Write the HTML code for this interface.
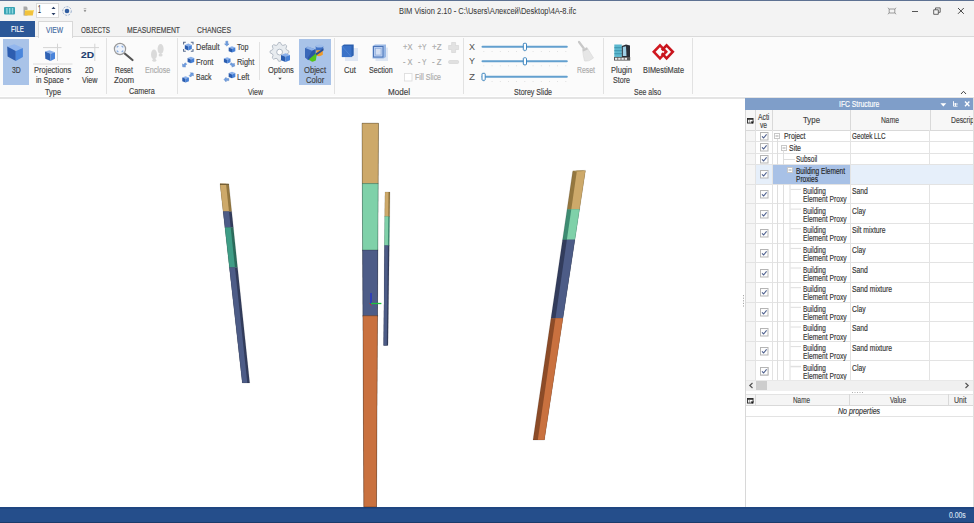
<!DOCTYPE html><html><head><meta charset="utf-8"><style>
*{margin:0;padding:0}
html,body{width:974px;height:523px;overflow:hidden;background:#fff}
body{position:relative;font-family:"Liberation Sans",sans-serif}
.t{position:absolute;white-space:nowrap;line-height:1;transform-origin:0 50%;-webkit-text-stroke:0.15px currentColor}
.r{position:absolute}
svg{position:absolute;overflow:visible}
</style></head><body>
<div class="r" style="left:0px;top:0px;width:974px;height:1px;background:#5d7192;"></div>
<div class="r" style="left:0px;top:1px;width:974px;height:36px;background:#f3f3f3;"></div>
<div class="r" style="left:0px;top:37px;width:974px;height:60px;background:#fbfbfb;"></div>
<div class="r" style="left:0px;top:36px;width:974px;height:1px;background:#dadada;"></div>
<div class="r" style="left:0px;top:96px;width:974px;height:1px;background:#ffffff;"></div>
<div class="r" style="left:0px;top:97px;width:974px;height:2px;background:#e4e4e4;"></div>
<div class="r" style="left:0px;top:99px;width:744px;height:408px;background:#ffffff;"></div>
<div class="r" style="left:0px;top:507px;width:974px;height:16px;background:#254e8b;"></div>
<div class="r" style="left:0px;top:507px;width:974px;height:1.5px;background:#1f4681;"></div>
<div class="r" style="left:0px;top:521.5px;width:974px;height:1.5px;background:#1c3b6a;"></div>
<div class="r" style="left:0px;top:21px;width:35px;height:16px;background:#2b5797;"></div>
<div class="t" style="left:10.80px;top:24.73px;font-size:8.5px;color:#ffffff;transform:scaleX(0.719);">FILE</div>
<div class="r" style="left:38px;top:21px;width:34.5px;height:17px;background:#fcfcfc;border:1px solid #d8d8d8;border-bottom:none;box-sizing:border-box;"></div>
<div class="t" style="left:46.00px;top:25.53px;font-size:8.5px;color:#4369a2;transform:scaleX(0.783);">VIEW</div>
<div class="t" style="left:81.00px;top:25.53px;font-size:8.5px;color:#444;transform:scaleX(0.740);">OBJECTS</div>
<div class="t" style="left:127.00px;top:25.53px;font-size:8.5px;color:#444;transform:scaleX(0.802);">MEASUREMENT</div>
<div class="t" style="left:197.00px;top:25.53px;font-size:8.5px;color:#444;transform:scaleX(0.809);">CHANGES</div>
<div class="t" style="left:398.60px;top:6.93px;font-size:8.5px;color:#3a3a3a;transform:scaleX(0.886);-webkit-text-stroke:0.05px #3a3a3a;">BIM Vision 2.10 - C:\Users\Алексей\Desktop\4A-8.ifc</div>
<div class="r" style="left:106px;top:38px;width:1px;height:56px;background:#e2e2e2;"></div>
<div class="r" style="left:177px;top:38px;width:1px;height:56px;background:#e2e2e2;"></div>
<div class="r" style="left:333.5px;top:38px;width:1.0px;height:56px;background:#e2e2e2;"></div>
<div class="r" style="left:463px;top:38px;width:1px;height:56px;background:#e2e2e2;"></div>
<div class="r" style="left:602.5px;top:38px;width:1.0px;height:56px;background:#e2e2e2;"></div>
<div class="r" style="left:692px;top:38px;width:1px;height:56px;background:#e2e2e2;"></div>
<div class="r" style="left:259px;top:42px;width:1px;height:38px;background:#e2e2e2;"></div>
<div class="r" style="left:3px;top:39px;width:26px;height:46px;background:#a9c3e8;"></div>
<div class="r" style="left:299px;top:39px;width:32px;height:46px;background:#a9c3e8;"></div>
<div class="t" style="left:11.50px;top:65.73px;font-size:8.5px;color:#3f3f3f;transform:scaleX(0.810);">3D</div>
<div class="t" style="left:34.30px;top:66.23px;font-size:8.5px;color:#3f3f3f;transform:scaleX(0.887);">Projections</div>
<div class="t" style="left:36.20px;top:75.73px;font-size:8.5px;color:#3f3f3f;transform:scaleX(0.840);">in Space</div>
<div class="t" style="left:85.00px;top:66.23px;font-size:8.5px;color:#3f3f3f;transform:scaleX(0.791);">2D</div>
<div class="t" style="left:82.00px;top:75.73px;font-size:8.5px;color:#3f3f3f;transform:scaleX(0.843);">View</div>
<div class="t" style="left:45.00px;top:87.73px;font-size:8.5px;color:#3f3f3f;transform:scaleX(0.868);">Type</div>
<div class="t" style="left:115.30px;top:65.83px;font-size:8.5px;color:#3f3f3f;transform:scaleX(0.802);">Reset</div>
<div class="t" style="left:114.20px;top:75.63px;font-size:8.5px;color:#3f3f3f;transform:scaleX(0.925);">Zoom</div>
<div class="t" style="left:144.60px;top:65.73px;font-size:8.5px;color:#aaaaaa;transform:scaleX(0.837);">Enclose</div>
<div class="t" style="left:129.10px;top:87.33px;font-size:8.5px;color:#3f3f3f;transform:scaleX(0.853);">Camera</div>
<div class="t" style="left:195.70px;top:42.83px;font-size:8.5px;color:#3f3f3f;transform:scaleX(0.876);">Default</div>
<div class="t" style="left:195.50px;top:57.73px;font-size:8.5px;color:#3f3f3f;transform:scaleX(0.877);">Front</div>
<div class="t" style="left:195.50px;top:72.93px;font-size:8.5px;color:#3f3f3f;transform:scaleX(0.820);">Back</div>
<div class="t" style="left:236.80px;top:42.83px;font-size:8.5px;color:#3f3f3f;transform:scaleX(0.839);">Top</div>
<div class="t" style="left:236.80px;top:57.73px;font-size:8.5px;color:#3f3f3f;transform:scaleX(0.867);">Right</div>
<div class="t" style="left:236.80px;top:72.93px;font-size:8.5px;color:#3f3f3f;transform:scaleX(0.875);">Left</div>
<div class="t" style="left:267.60px;top:66.23px;font-size:8.5px;color:#3f3f3f;transform:scaleX(0.881);">Options</div>
<div class="t" style="left:303.90px;top:66.23px;font-size:8.5px;color:#3f3f3f;transform:scaleX(0.896);">Object</div>
<div class="t" style="left:305.80px;top:75.53px;font-size:8.5px;color:#3f3f3f;transform:scaleX(0.896);">Color</div>
<div class="t" style="left:248.00px;top:87.73px;font-size:8.5px;color:#3f3f3f;transform:scaleX(0.821);">View</div>
<div class="t" style="left:343.80px;top:65.83px;font-size:8.5px;color:#3f3f3f;transform:scaleX(0.892);">Cut</div>
<div class="t" style="left:369.00px;top:65.83px;font-size:8.5px;color:#3f3f3f;transform:scaleX(0.836);">Section</div>
<div class="t" style="left:403.00px;top:42.73px;font-size:8.5px;color:#aaaaaa;transform:scaleX(0.884);">+X</div>
<div class="t" style="left:417.50px;top:42.73px;font-size:8.5px;color:#aaaaaa;transform:scaleX(0.799);">+Y</div>
<div class="t" style="left:432.00px;top:42.73px;font-size:8.5px;color:#aaaaaa;transform:scaleX(0.935);">+Z</div>
<div class="t" style="left:403.00px;top:58.13px;font-size:8.5px;color:#aaaaaa;transform:scaleX(0.865);">- X</div>
<div class="t" style="left:417.50px;top:58.13px;font-size:8.5px;color:#aaaaaa;transform:scaleX(0.794);">- Y</div>
<div class="t" style="left:432.00px;top:58.13px;font-size:8.5px;color:#aaaaaa;transform:scaleX(0.915);">- Z</div>
<div class="t" style="left:415.00px;top:72.73px;font-size:8.5px;color:#aaaaaa;transform:scaleX(0.822);">Fill Slice</div>
<div class="t" style="left:388.00px;top:87.73px;font-size:8.5px;color:#3f3f3f;transform:scaleX(0.950);">Model</div>
<div class="t" style="left:469.00px;top:42.73px;font-size:8.5px;color:#505050;transform:scaleX(1.058);-webkit-text-stroke:0;">X</div>
<div class="t" style="left:469.00px;top:57.03px;font-size:8.5px;color:#505050;transform:scaleX(1.058);-webkit-text-stroke:0;">Y</div>
<div class="t" style="left:469.00px;top:72.73px;font-size:8.5px;color:#505050;transform:scaleX(1.156);-webkit-text-stroke:0;">Z</div>
<div class="t" style="left:577.00px;top:66.03px;font-size:8.5px;color:#aaaaaa;transform:scaleX(0.811);">Reset</div>
<div class="t" style="left:514.00px;top:87.73px;font-size:8.5px;color:#3f3f3f;transform:scaleX(0.829);">Storey Slide</div>
<div class="t" style="left:611.00px;top:66.13px;font-size:8.5px;color:#3f3f3f;transform:scaleX(0.889);">Plugin</div>
<div class="t" style="left:613.00px;top:75.73px;font-size:8.5px;color:#3f3f3f;transform:scaleX(0.837);">Store</div>
<div class="t" style="left:643.00px;top:66.13px;font-size:8.5px;color:#3f3f3f;transform:scaleX(0.868);">BIMestiMate</div>
<div class="t" style="left:634.00px;top:87.73px;font-size:8.5px;color:#3f3f3f;transform:scaleX(0.816);">See also</div>
<svg style="left:0;top:0" width="974" height="523"><polygon points="220.00,183.70 228.77,183.70 231.72,211.80 223.14,211.80" fill="#94773f"/><polygon points="220.00,183.70 226.00,183.70 229.00,211.80 223.14,211.80" fill="#cda96a"/><polygon points="223.10,211.40 231.68,211.40 233.40,227.80 224.93,227.80" fill="#323c5c"/><polygon points="223.10,211.40 228.96,211.40 230.71,227.80 224.93,227.80" fill="#4d5c87"/><polygon points="224.89,227.40 233.36,227.40 237.60,267.80 229.41,267.80" fill="#2b6b5b"/><polygon points="224.89,227.40 230.67,227.40 234.99,267.80 229.41,267.80" fill="#3f9d86"/><polygon points="229.37,267.40 237.56,267.40 249.70,383.00 242.30,383.00" fill="#323c5c"/><polygon points="229.37,267.40 234.95,267.40 247.30,383.00 242.30,383.00" fill="#4d5c87"/><polygon points="220,183.7 228.8,184 228.8,185 220,185" fill="#7a6438"/><polygon points="362.00,123.20 378.50,123.20 378.18,184.00 362.29,184.00" fill="#94773f"/><polygon points="362.00,123.20 378.50,123.20 378.18,184.00 362.29,184.00" fill="#cda96a"/><polygon points="362.28,183.60 378.19,183.60 377.84,250.40 362.60,250.40" fill="#3e8c72"/><polygon points="362.28,183.60 378.19,183.60 377.84,250.40 362.60,250.40" fill="#7fd1a9"/><polygon points="362.59,250.00 377.84,250.00 377.49,316.20 362.91,316.20" fill="#323c5c"/><polygon points="362.59,250.00 377.84,250.00 377.49,316.20 362.91,316.20" fill="#4d5c87"/><polygon points="362.90,315.80 377.50,315.80 376.50,507.00 363.80,507.00" fill="#8c4b27"/><polygon points="362.90,315.80 377.50,315.80 376.50,507.00 363.80,507.00" fill="#c9713f"/><path d="M362.3 183.6 H378.2" stroke="#00000045" stroke-width="0.8"/><path d="M362.3 250 H378.2" stroke="#00000045" stroke-width="0.8"/><path d="M362.3 315.8 H378.2" stroke="#00000045" stroke-width="0.8"/><polygon points="362,123.2 378.5,123.2 376.5,507 363.8,507" fill="none" stroke="#00000055" stroke-width="0.8"/><polygon points="385.00,192.00 390.00,192.00 389.68,216.90 384.77,216.90" fill="#94773f"/><polygon points="385.00,192.00 388.50,192.00 388.22,216.90 384.77,216.90" fill="#cda96a"/><polygon points="384.78,216.50 389.68,216.50 389.30,245.90 384.51,245.90" fill="#3e8c72"/><polygon points="384.78,216.50 388.23,216.50 387.90,245.90 384.51,245.90" fill="#7fd1a9"/><polygon points="384.51,245.50 389.30,245.50 388.00,345.50 383.60,345.50" fill="#323c5c"/><polygon points="384.51,245.50 387.91,245.50 386.80,345.50 383.60,345.50" fill="#4d5c87"/><polygon points="572.76,170.80 585.42,170.80 579.50,209.70 567.02,209.70" fill="#94773f"/><polygon points="576.90,170.80 585.42,170.80 579.50,209.70 571.25,209.70" fill="#cda96a"/><polygon points="567.08,209.30 579.56,209.30 574.85,240.20 562.51,240.20" fill="#3e8c72"/><polygon points="571.31,209.30 579.56,209.30 574.85,240.20 566.82,240.20" fill="#7fd1a9"/><polygon points="562.57,239.80 574.91,239.80 562.89,318.70 550.92,318.70" fill="#323c5c"/><polygon points="566.88,239.80 574.91,239.80 562.89,318.70 555.42,318.70" fill="#4d5c87"/><polygon points="550.98,318.30 562.95,318.30 544.40,440.00 533.00,440.00" fill="#8c4b27"/><polygon points="555.48,318.30 562.95,318.30 544.40,440.00 537.80,440.00" fill="#c9713f"/><polygon points="572.6,171.9 576.4,170.8 585.5,170.3 581.5,171.5" fill="#b89a5a"/><polygon points="220,183.7 228.8,184 249.7,383 242.3,383" fill="none" stroke="#00000030" stroke-width="0.6"/><polygon points="385,192 390,192 388,345.5 383.6,345.5" fill="none" stroke="#00000030" stroke-width="0.5"/><polygon points="572.6,171.9 576.4,170.8 585.5,170.3 544.4,440 533,440" fill="none" stroke="#00000030" stroke-width="0.6"/><path d="M371 293 V303.5" stroke="#2030d0" stroke-width="1.3"/><path d="M371 303.5 H381.4" stroke="#20c040" stroke-width="1.3"/><path d="M369.5 303.5 L371.5 305.5" stroke="#c03030" stroke-width="1"/></svg>
<svg style="left:4px;top:6.8px" width="11" height="8" viewBox="0 0 11 8"><rect x="0" y="0" width="11" height="7.5" rx="1" fill="#3aa4b4"/><rect x="2.2" y="1" width="1.4" height="5.5" fill="#8fd8e0"/><rect x="5" y="1" width="1.4" height="5.5" fill="#8fd8e0"/><rect x="7.8" y="1" width="1.4" height="5.5" fill="#8fd8e0"/></svg>
<svg style="left:22.5px;top:6px" width="11" height="10" viewBox="0 0 11 10"><path d="M0.5 0.5 H3.5 L4.5 1.8 V9.5 H0.5Z" fill="#a8a8a8"/><path d="M2 4 H10.8 L9.8 9.6 H1.5Z" fill="#f2c23a"/><path d="M2 4 H10.8 L10.6 5 H1.9Z" fill="#f8dc70"/></svg>
<div class="r" style="left:35.6px;top:3.2px;width:23.5px;height:14.8px;background:#ffffff;border:1px solid #dadada;box-sizing:border-box;"></div>
<div class="t" style="left:38.20px;top:5.28px;font-size:10px;color:#333;transform:scaleX(0.539);-webkit-text-stroke:0.1px #333;">1</div>
<svg style="left:50.5px;top:5.5px" width="5" height="10" viewBox="0 0 5 10"><path d="M0.5 3 L2.5 0.8 L4.5 3Z" fill="#2b3f66"/><path d="M0.5 7 L2.5 9.2 L4.5 7Z" fill="#2b3f66"/></svg>
<svg style="left:62.3px;top:5.5px" width="10" height="10" viewBox="0 0 10 10"><circle cx="5" cy="5" r="4.3" fill="none" stroke="#8ea6c8" stroke-width="0.9" stroke-dasharray="2 1.2"/><circle cx="5" cy="5" r="2.3" fill="#2f5ca0"/></svg>
<svg style="left:82.5px;top:8px" width="4" height="5" viewBox="0 0 4 5"><path d="M0.7 0.7 H3.3" stroke="#999" stroke-width="0.7"/><path d="M0.6 2.2 H3.4 L2 4Z" fill="#777"/></svg>
<svg style="left:886.5px;top:6.5px" width="10" height="8" viewBox="0 0 10 8" fill="none" stroke="#777" stroke-width="0.7"><path d="M2.2 2 H7.8 V6 H2.2Z"/><path d="M0.8 0.8 L2.2 2 M9.2 0.8 L7.8 2 M0.8 7.2 L2.2 6 M9.2 7.2 L7.8 6"/></svg>
<div class="r" style="left:911.5px;top:11.3px;width:6.0px;height:1.1999999999999993px;background:#555;"></div>
<svg style="left:932.5px;top:6.5px" width="8" height="8" viewBox="0 0 8 8" fill="none" stroke="#555" stroke-width="0.9"><path d="M0.7 2.8 H5.3 V7.3 H0.7Z"/><path d="M2.5 2.8 V0.9 H7.2 V5.3 H5.3"/></svg>
<svg style="left:956.5px;top:6.5px" width="8" height="8" viewBox="0 0 8 8" fill="none" stroke="#444" stroke-width="1"><path d="M1 1 L6.8 6.8 M6.8 1 L1 6.8"/></svg>
<svg style="left:960px;top:89.5px" width="7" height="5" viewBox="0 0 7 5"><path d="M1 4 L3.5 1.3 L6 4" fill="none" stroke="#444" stroke-width="1"/></svg>
<svg style="left:6px;top:43px" width="18" height="19" viewBox="0 0 18 19"><path d="M1.2 3.6 L8.3 1.2 L16.9 5 L9.8 7.9Z" fill="#92b6ee"/><path d="M1.2 3.6 L9.8 7.9 L9.8 18 L1.6 13.6Z" fill="#2d5db0"/><path d="M9.8 7.9 L16.9 5 L16.9 14.1 L9.8 18Z" fill="#4a86dc"/></svg>
<svg style="left:33px;top:43px" width="40" height="22" viewBox="0 0 40 22"><path d="M10 4.6 H28.5" stroke="#d4d4d4" stroke-width="1"/><path d="M24.5 0.7 V18" stroke="#d4d4d4" stroke-width="1"/><path d="M0 21 H39.5" stroke="#dcdcdc" stroke-width="1"/><path d="M12 8.6 L16.5 7.3 L22 9.3 L17.5 10.8Z" fill="#8ab0ea"/><path d="M12 8.6 L17.5 10.8 L17.5 18 L12.3 15.8Z" fill="#2f62b4"/><path d="M17.5 10.8 L22 9.3 L22 15.8 L17.5 18Z" fill="#4a84da"/></svg>
<svg style="left:79px;top:43px" width="21" height="19" viewBox="0 0 21 19"><path d="M1 4.6 H20" stroke="#d4d4d4" stroke-width="1"/><path d="M15.8 0.7 V18" stroke="#d4d4d4" stroke-width="1"/></svg>
<div class="t" style="left:81.20px;top:49.83px;font-size:9.5px;color:#1f3d70;transform:scaleX(1.070);font-weight:bold;">2D</div>
<svg style="left:113px;top:42px" width="22" height="20" viewBox="0 0 22 20"><path d="M10.5 10.5 L19.5 18" stroke="#555" stroke-width="2.2" stroke-linecap="round"/><circle cx="7" cy="7" r="5.6" fill="#eef3fb" stroke="#9a9a9a" stroke-width="1.2"/><g stroke="#6e9ad8" stroke-width="0.9" fill="none"><path d="M4.2 5.6 V4.3 H5.5 M8.5 4.3 H9.8 V5.6 M9.8 8.4 V9.7 H8.5 M5.5 9.7 H4.2 V8.4"/></g></svg>
<svg style="left:150px;top:43px" width="15" height="19" viewBox="0 0 15 19" fill="#dadada"><ellipse cx="4" cy="11.5" rx="3" ry="5"/><ellipse cx="4.3" cy="17.3" rx="2" ry="1.5"/><ellipse cx="10.6" cy="6" rx="3" ry="5"/><ellipse cx="10.6" cy="12" rx="2" ry="1.5"/></svg>
<svg style="left:0;top:0" width="974" height="100"><g fill="none" stroke="#5a6e90" stroke-width="1.1"><path d="M183.6 44.5 V42.3 H185.8 M190.8 42.3 H193 V44.5 M193 49 V51.2 H190.8 M185.8 51.2 H183.6 V49"/></g><g transform="translate(188.3,46.8) scale(1.0)"><path d="M-3.5 -1.8 L0 -3.2 L3.5 -1.8 L0 -0.4Z" fill="#8ab0ea"/><path d="M-3.5 -1.8 L0 -0.4 L0 3.6 L-3.5 2.2Z" fill="#2a5cae"/><path d="M0 -0.4 L3.5 -1.8 L3.5 2.2 L0 3.6Z" fill="#4680d6"/></g><g transform="translate(232,49.2) scale(0.95)"><path d="M-3.5 -1.8 L0 -3.2 L3.5 -1.8 L0 -0.4Z" fill="#8ab0ea"/><path d="M-3.5 -1.8 L0 -0.4 L0 3.6 L-3.5 2.2Z" fill="#2a5cae"/><path d="M0 -0.4 L3.5 -1.8 L3.5 2.2 L0 3.6Z" fill="#4680d6"/></g><g transform="translate(226.8,43.4) rotate(90)"><path d="M-2.2 -1 H0.5 V-2.3 L2.6 0 L0.5 2.3 V1 H-2.2Z" fill="#6f9ee0" stroke="#4a78c0" stroke-width="0.4"/></g><g transform="translate(190.9,59.8) scale(0.95)"><path d="M-3.5 -1.8 L0 -3.2 L3.5 -1.8 L0 -0.4Z" fill="#8ab0ea"/><path d="M-3.5 -1.8 L0 -0.4 L0 3.6 L-3.5 2.2Z" fill="#2a5cae"/><path d="M0 -0.4 L3.5 -1.8 L3.5 2.2 L0 3.6Z" fill="#4680d6"/></g><g transform="translate(184.5,65) rotate(135)"><path d="M-2.2 -1 H0.5 V-2.3 L2.6 0 L0.5 2.3 V1 H-2.2Z" fill="#6f9ee0" stroke="#4a78c0" stroke-width="0.4"/></g><g transform="translate(185.6,79.2) scale(0.95)"><path d="M-3.5 -1.8 L0 -3.2 L3.5 -1.8 L0 -0.4Z" fill="#8ab0ea"/><path d="M-3.5 -1.8 L0 -0.4 L0 3.6 L-3.5 2.2Z" fill="#2a5cae"/><path d="M0 -0.4 L3.5 -1.8 L3.5 2.2 L0 3.6Z" fill="#4680d6"/></g><g transform="translate(191.4,74.8) rotate(-45)"><path d="M-2.2 -1 H0.5 V-2.3 L2.6 0 L0.5 2.3 V1 H-2.2Z" fill="#6f9ee0" stroke="#4a78c0" stroke-width="0.4"/></g><g transform="translate(227.2,60.2) scale(0.95)"><path d="M-3.5 -1.8 L0 -3.2 L3.5 -1.8 L0 -0.4Z" fill="#8ab0ea"/><path d="M-3.5 -1.8 L0 -0.4 L0 3.6 L-3.5 2.2Z" fill="#2a5cae"/><path d="M0 -0.4 L3.5 -1.8 L3.5 2.2 L0 3.6Z" fill="#4680d6"/></g><g transform="translate(232.5,64.8) rotate(30)"><path d="M-2.2 -1 H0.5 V-2.3 L2.6 0 L0.5 2.3 V1 H-2.2Z" fill="#6f9ee0" stroke="#4a78c0" stroke-width="0.4"/></g><g transform="translate(232,74.8) scale(0.95)"><path d="M-3.5 -1.8 L0 -3.2 L3.5 -1.8 L0 -0.4Z" fill="#8ab0ea"/><path d="M-3.5 -1.8 L0 -0.4 L0 3.6 L-3.5 2.2Z" fill="#2a5cae"/><path d="M0 -0.4 L3.5 -1.8 L3.5 2.2 L0 3.6Z" fill="#4680d6"/></g><g transform="translate(226.6,79.6) rotate(180)"><path d="M-2.2 -1 H0.5 V-2.3 L2.6 0 L0.5 2.3 V1 H-2.2Z" fill="#6f9ee0" stroke="#4a78c0" stroke-width="0.4"/></g></svg>
<svg style="left:0;top:0" width="974" height="100"><polygon points="288.85,50.96 288.86,52.80 286.49,54.01 285.94,55.33 286.78,57.85 285.48,59.16 282.95,58.33 281.63,58.88 280.44,61.25 278.60,61.26 277.39,58.89 276.07,58.34 273.55,59.18 272.24,57.88 273.07,55.35 272.52,54.03 270.15,52.84 270.14,51.00 272.51,49.79 273.06,48.47 272.22,45.95 273.52,44.64 276.05,45.47 277.37,44.92 278.56,42.55 280.40,42.54 281.61,44.91 282.93,45.46 285.45,44.62 286.76,45.92 285.93,48.45 286.48,49.77" fill="#e8ecf0" stroke="#b4bcc6" stroke-width="1"/><circle cx="279.6" cy="52.1" r="2.9" fill="#ffffff" stroke="#a8b2be" stroke-width="0.9"/><path d="M281 55 L285.5 53.3 L290 55 L285.5 56.7Z" fill="#8ab0ea"/><path d="M281 55 L285.5 56.7 L285.5 62 L281 60.3Z" fill="#2a5cae"/><path d="M285.5 56.7 L290 55 L290 60.3 L285.5 62Z" fill="#4680d6"/><path d="M278.2 77.8 H281.8 L280 79.8Z" fill="#555"/><path d="M66.5 78.2 H69.8 L68.15 80Z" fill="#555"/></svg>
<svg style="left:0;top:0" width="974" height="100"><path d="M305 48.2 L307.6 46.7 L315.7 49.6 L315.4 54.2 L308.2 60.2 L305 57.4Z" fill="#3a68b8"/><path d="M305.4 48 L308.2 46.6 L315.4 49.3 L312.2 50.8Z" fill="#8db0e6"/><path d="M312.2 50.8 L315.4 49.3 L315.4 54.2 L308.6 60 L307.8 58Z" fill="#2d56a2"/><rect x="315.7" y="46" width="7.5" height="4.6" fill="#3f70c4"/><ellipse cx="319.45" cy="46" rx="3.75" ry="1.6" fill="#9dbcea"/><path d="M316.4 50.3 H322.8 V54.8 Q319.6 57.2 316.4 55.5Z" fill="#f09a28"/><path d="M323.6 48.2 L316 53.2 L309 59.6 L310 60.6 L316.6 55.3 L323.4 50.6Z" fill="#2a4f92"/><path d="M308.8 59.5 L315.8 53.6 L316.6 55.8 L315.8 60.6 Q313.5 62 311.6 61.6Z" fill="#52c51c"/></svg>
<svg style="left:0;top:0" width="974" height="100"><path d="M345 48 L358 48 L358 61 L345 61Z" fill="#c9d7ee" opacity="0.55"/><path d="M341.9 46 L344 44.5 L353.7 44.5 L353.7 55.5 L351.5 57.1 L341.9 57.1Z" fill="#2c60b0"/><path d="M341.9 46 L351.5 46 L351.5 57.1 L341.9 57.1Z" fill="#3a72c8"/><path d="M341.9 46 L351.5 57.1" stroke="#5a8ed8" stroke-width="0.6"/><path d="M375.5 47.5 L388 47.5 L388 61 L375.5 61Z" fill="#cbd8ee" opacity="0.6"/><path d="M372.5 46 L375 44.5 L386 44.5 L386 57 L383.5 58.5 L372.5 58.5Z" fill="#9ab8e4"/><rect x="373.5" y="46.5" width="9.5" height="10.5" fill="#b8cdf0" stroke="#4a74b8" stroke-width="1"/><rect x="375.5" y="48.5" width="5.5" height="6.5" fill="#d4e0f4" stroke="#8aa8d8" stroke-width="0.6"/></svg>
<svg style="left:0;top:0" width="974" height="100"><path d="M451.6 42.5 H455.6 V45.5 H458.6 V49.5 H455.6 V52.5 H451.6 V49.5 H448.6 V45.5 H451.6Z" fill="#e2e2e2" stroke="#d2d2d2" stroke-width="0.6"/><rect x="448.6" y="60.5" width="10" height="3" rx="1" fill="#e0e0e0" stroke="#d2d2d2" stroke-width="0.6"/><rect x="404.5" y="73.5" width="7.5" height="7.5" fill="#fff" stroke="#dedede" stroke-width="0.9"/></svg>
<svg style="left:0;top:0" width="974" height="100"><path d="M482.5 46.8 H566.8" stroke="#63a0cf" stroke-width="2" stroke-linecap="round"/><rect x="483.5" y="51.0" width="0.7" height="0.7" fill="#c6c6c6"/><rect x="491.7" y="51.0" width="0.7" height="0.7" fill="#c6c6c6"/><rect x="499.9" y="51.0" width="0.7" height="0.7" fill="#c6c6c6"/><rect x="508.1" y="51.0" width="0.7" height="0.7" fill="#c6c6c6"/><rect x="516.3" y="51.0" width="0.7" height="0.7" fill="#c6c6c6"/><rect x="524.5" y="51.0" width="0.7" height="0.7" fill="#c6c6c6"/><rect x="532.7" y="51.0" width="0.7" height="0.7" fill="#c6c6c6"/><rect x="540.9" y="51.0" width="0.7" height="0.7" fill="#c6c6c6"/><rect x="549.1" y="51.0" width="0.7" height="0.7" fill="#c6c6c6"/><rect x="557.3" y="51.0" width="0.7" height="0.7" fill="#c6c6c6"/><rect x="565.5" y="51.0" width="0.7" height="0.7" fill="#c6c6c6"/><rect x="523.3" y="43.3" width="3.2" height="7" rx="0.8" fill="#ffffff" stroke="#3f86bf" stroke-width="1"/><path d="M482.5 61.3 H566.8" stroke="#63a0cf" stroke-width="2" stroke-linecap="round"/><rect x="483.5" y="65.5" width="0.7" height="0.7" fill="#c6c6c6"/><rect x="491.7" y="65.5" width="0.7" height="0.7" fill="#c6c6c6"/><rect x="499.9" y="65.5" width="0.7" height="0.7" fill="#c6c6c6"/><rect x="508.1" y="65.5" width="0.7" height="0.7" fill="#c6c6c6"/><rect x="516.3" y="65.5" width="0.7" height="0.7" fill="#c6c6c6"/><rect x="524.5" y="65.5" width="0.7" height="0.7" fill="#c6c6c6"/><rect x="532.7" y="65.5" width="0.7" height="0.7" fill="#c6c6c6"/><rect x="540.9" y="65.5" width="0.7" height="0.7" fill="#c6c6c6"/><rect x="549.1" y="65.5" width="0.7" height="0.7" fill="#c6c6c6"/><rect x="557.3" y="65.5" width="0.7" height="0.7" fill="#c6c6c6"/><rect x="565.5" y="65.5" width="0.7" height="0.7" fill="#c6c6c6"/><rect x="523.3" y="57.8" width="3.2" height="7" rx="0.8" fill="#ffffff" stroke="#3f86bf" stroke-width="1"/><path d="M482.5 76.8 H566.8" stroke="#63a0cf" stroke-width="2" stroke-linecap="round"/><rect x="483.5" y="81.0" width="0.7" height="0.7" fill="#c6c6c6"/><rect x="491.7" y="81.0" width="0.7" height="0.7" fill="#c6c6c6"/><rect x="499.9" y="81.0" width="0.7" height="0.7" fill="#c6c6c6"/><rect x="508.1" y="81.0" width="0.7" height="0.7" fill="#c6c6c6"/><rect x="516.3" y="81.0" width="0.7" height="0.7" fill="#c6c6c6"/><rect x="524.5" y="81.0" width="0.7" height="0.7" fill="#c6c6c6"/><rect x="532.7" y="81.0" width="0.7" height="0.7" fill="#c6c6c6"/><rect x="540.9" y="81.0" width="0.7" height="0.7" fill="#c6c6c6"/><rect x="549.1" y="81.0" width="0.7" height="0.7" fill="#c6c6c6"/><rect x="557.3" y="81.0" width="0.7" height="0.7" fill="#c6c6c6"/><rect x="565.5" y="81.0" width="0.7" height="0.7" fill="#c6c6c6"/><rect x="482.0" y="73.3" width="3.2" height="7" rx="0.8" fill="#ffffff" stroke="#3f86bf" stroke-width="1"/></svg>
<svg style="left:576px;top:41px" width="20" height="22" viewBox="0 0 20 22"><path d="M3 1 L9 9" stroke="#c8c8c8" stroke-width="2.2" stroke-linecap="round"/><path d="M6.5 8.5 L11 6.5 L17.5 17 Q13 21 8.5 20 Q7 14 6.5 8.5Z" fill="#e6e6e6" stroke="#d6d6d6" stroke-width="0.6"/><path d="M6.5 8.5 L11 6.5 L11.8 8.5 L7.2 10.5Z" fill="#c8c8c8"/></svg>
<svg style="left:613.5px;top:44px" width="17" height="17" viewBox="0 0 17 17"><rect x="0.3" y="0.5" width="7.5" height="12.5" fill="#5cb8cf"/><rect x="0.3" y="3.3" width="7.5" height="0.9" fill="#3a8fa8"/><rect x="0.3" y="6.3" width="7.5" height="0.9" fill="#3a8fa8"/><rect x="0.3" y="9.3" width="7.5" height="0.9" fill="#3a8fa8"/><path d="M7.8 2 L12 0.5 L16 1.5 L16 13 L7.8 13Z" fill="#2a2e36"/><path d="M8.8 3 L12 2.2 L12.5 12 L8.8 12Z" fill="#9fd0e6"/><rect x="0" y="13" width="16.2" height="3.6" fill="#5a5a5a"/><rect x="1" y="13.8" width="2.4" height="2" fill="#e8e8e8"/><rect x="4.2" y="13.8" width="2.4" height="2" fill="#e8e8e8"/><rect x="7.4" y="13.8" width="2.4" height="2" fill="#e8e8e8"/><rect x="10.6" y="13.8" width="2.4" height="2" fill="#e8e8e8"/></svg>
<svg style="left:652px;top:44px" width="23" height="16" viewBox="0 0 23 16"><path d="M8 1.3 L14.2 7.8 L8 14.3 L1.8 7.8Z" fill="none" stroke="#d01820" stroke-width="2.6" stroke-linejoin="miter"/><path d="M14.6 1.3 L20.8 7.8 L14.6 14.3 L8.4 7.8Z" fill="none" stroke="#c8141c" stroke-width="2.6"/><path d="M8 4.5 L11.2 7.8 L8 11 L4.8 7.8Z" fill="#ffffff"/></svg>
<svg style="left:742.5px;top:295px" width="2" height="14"><g fill="#a8a8a8"><rect x="0" y="0" width="1.2" height="1.2"/><rect x="0" y="2.6" width="1.2" height="1.2"/><rect x="0" y="5.2" width="1.2" height="1.2"/><rect x="0" y="7.8" width="1.2" height="1.2"/><rect x="0" y="10.4" width="1.2" height="1.2"/></g></svg>
<div class="t" style="left:949.00px;top:511.03px;font-size:8.5px;color:#d6e0f0;transform:scaleX(0.803);">0.00s</div>
<div class="r" style="left:744px;top:99px;width:230px;height:408px;background:#ffffff;"></div>
<div class="r" style="left:745px;top:98px;width:1px;height:409px;background:#d8d8d8;"></div>
<div class="r" style="left:745px;top:98px;width:229px;height:12.299999999999997px;background:#7f9ec9;"></div>
<div class="t" style="left:838.60px;top:99.93px;font-size:8.5px;color:#ffffff;transform:scaleX(0.799);">IFC Structure</div>
<svg style="left:0;top:0" width="974" height="120"><path d="M940.4 103.2 H946.3 L943.35 106.6Z" fill="#ffffff"/><path d="M953.5 101.2 V106.2 H957.5 M955.5 103 V106.2 M953.5 104 H957.8" fill="none" stroke="#ffffff" stroke-width="0.9"/><path d="M965 101.5 L969.4 106.3 M969.4 101.5 L965 106.3" stroke="#ffffff" stroke-width="1.3"/></svg>
<div class="r" style="left:745px;top:110px;width:229px;height:20px;background:#f7f7f7;"></div>
<div class="r" style="left:745px;top:130px;width:10px;height:250px;background:#f5f5f5;"></div>
<div class="r" style="left:755px;top:110px;width:1.2000000000000455px;height:20px;background:#d9d9d9;"></div>
<div class="r" style="left:772px;top:110px;width:1.2000000000000455px;height:20px;background:#d9d9d9;"></div>
<div class="r" style="left:850px;top:110px;width:1.2000000000000455px;height:20px;background:#d9d9d9;"></div>
<div class="r" style="left:929.5px;top:110px;width:1.2000000000000455px;height:20px;background:#d9d9d9;"></div>
<div class="r" style="left:745px;top:129.5px;width:229px;height:1.0px;background:#d9d9d9;"></div>
<svg style="left:747px;top:117.5px" width="7" height="6" viewBox="0 0 7 6"><rect x="0.45" y="0.45" width="5.6" height="4.6" fill="#fff" stroke="#2a2a2a" stroke-width="0.9"/><rect x="0.45" y="0.45" width="5.6" height="1.3" fill="#2a2a2a"/><path d="M2.3 1.7 V5" stroke="#555" stroke-width="0.6"/><path d="M3.6 3.4 L6.8 3.4 L5.2 5.8Z" fill="#111"/></svg>
<div class="t" style="left:757.80px;top:112.53px;font-size:8.5px;color:#444;transform:scaleX(0.797);">Acti</div>
<div class="t" style="left:759.90px;top:121.03px;font-size:8.5px;color:#444;transform:scaleX(0.791);">ve</div>
<div class="t" style="left:803.00px;top:116.03px;font-size:8.5px;color:#444;transform:scaleX(0.922);">Type</div>
<div class="t" style="left:881.00px;top:116.03px;font-size:8.5px;color:#444;transform:scaleX(0.794);">Name</div>
<div style="position:absolute;left:930px;top:110px;width:42.5px;height:20px;overflow:hidden">
<div class="t" style="left:21.00px;top:6.03px;font-size:8.5px;color:#444;transform:scaleX(0.800);">Description</div>
</div>
<div class="r" style="left:745px;top:141.3px;width:229px;height:1.0px;background:#e3e3e3;"></div>
<div class="r" style="left:745px;top:152.5px;width:229px;height:1.0px;background:#e3e3e3;"></div>
<div class="r" style="left:745px;top:164.0px;width:229px;height:1.0px;background:#e3e3e3;"></div>
<div class="r" style="left:745px;top:183.6px;width:229px;height:1.0px;background:#e3e3e3;"></div>
<div class="r" style="left:745px;top:203.25px;width:229px;height:1.0px;background:#e3e3e3;"></div>
<div class="r" style="left:745px;top:222.9px;width:229px;height:1.0px;background:#e3e3e3;"></div>
<div class="r" style="left:745px;top:242.55px;width:229px;height:1.0px;background:#e3e3e3;"></div>
<div class="r" style="left:745px;top:262.2px;width:229px;height:1.0px;background:#e3e3e3;"></div>
<div class="r" style="left:745px;top:281.84999999999997px;width:229px;height:1.0px;background:#e3e3e3;"></div>
<div class="r" style="left:745px;top:301.49999999999994px;width:229px;height:1.0px;background:#e3e3e3;"></div>
<div class="r" style="left:745px;top:321.1499999999999px;width:229px;height:1.0px;background:#e3e3e3;"></div>
<div class="r" style="left:745px;top:340.7999999999999px;width:229px;height:1.0px;background:#e3e3e3;"></div>
<div class="r" style="left:745px;top:360.4499999999999px;width:229px;height:1.0px;background:#e3e3e3;"></div>
<div class="r" style="left:745px;top:380.09999999999985px;width:229px;height:1.0px;background:#e3e3e3;"></div>
<div class="r" style="left:755px;top:130px;width:1px;height:250px;background:#e3e3e3;"></div>
<div class="r" style="left:772px;top:130px;width:1px;height:250px;background:#e3e3e3;"></div>
<div class="r" style="left:850.3px;top:130px;width:1.0px;height:250px;background:#e3e3e3;"></div>
<div class="r" style="left:929.3px;top:130px;width:1.0px;height:250px;background:#e3e3e3;"></div>
<div class="r" style="left:755.5px;top:164.9px;width:16.5px;height:18.69999999999999px;background:#e6effa;"></div>
<div class="r" style="left:772.5px;top:164.9px;width:77.79999999999995px;height:18.69999999999999px;background:#a8c1e6;"></div>
<div class="r" style="left:850.8px;top:164.9px;width:123.20000000000005px;height:18.69999999999999px;background:#e6effa;"></div>
<svg style="left:760px;top:132.1px" width="8.5" height="8.5" viewBox="0 0 8.5 8.5"><rect x="0.5" y="0.5" width="7.5" height="7.5" fill="#fdfdfd" stroke="#b5b5b5" stroke-width="1"/><path d="M2 4.3 L3.6 6 L6.6 2.3" fill="none" stroke="#4b5d8c" stroke-width="1.1"/></svg>
<svg style="left:760px;top:143.4px" width="8.5" height="8.5" viewBox="0 0 8.5 8.5"><rect x="0.5" y="0.5" width="7.5" height="7.5" fill="#fdfdfd" stroke="#b5b5b5" stroke-width="1"/><path d="M2 4.3 L3.6 6 L6.6 2.3" fill="none" stroke="#4b5d8c" stroke-width="1.1"/></svg>
<svg style="left:760px;top:154.8px" width="8.5" height="8.5" viewBox="0 0 8.5 8.5"><rect x="0.5" y="0.5" width="7.5" height="7.5" fill="#fdfdfd" stroke="#b5b5b5" stroke-width="1"/><path d="M2 4.3 L3.6 6 L6.6 2.3" fill="none" stroke="#4b5d8c" stroke-width="1.1"/></svg>
<svg style="left:760px;top:170.3px" width="8.5" height="8.5" viewBox="0 0 8.5 8.5"><rect x="0.5" y="0.5" width="7.5" height="7.5" fill="#fdfdfd" stroke="#b5b5b5" stroke-width="1"/><path d="M2 4.3 L3.6 6 L6.6 2.3" fill="none" stroke="#4b5d8c" stroke-width="1.1"/></svg>
<svg style="left:760px;top:189.9px" width="8.5" height="8.5" viewBox="0 0 8.5 8.5"><rect x="0.5" y="0.5" width="7.5" height="7.5" fill="#fdfdfd" stroke="#b5b5b5" stroke-width="1"/><path d="M2 4.3 L3.6 6 L6.6 2.3" fill="none" stroke="#4b5d8c" stroke-width="1.1"/></svg>
<svg style="left:760px;top:209.6px" width="8.5" height="8.5" viewBox="0 0 8.5 8.5"><rect x="0.5" y="0.5" width="7.5" height="7.5" fill="#fdfdfd" stroke="#b5b5b5" stroke-width="1"/><path d="M2 4.3 L3.6 6 L6.6 2.3" fill="none" stroke="#4b5d8c" stroke-width="1.1"/></svg>
<svg style="left:760px;top:229.2px" width="8.5" height="8.5" viewBox="0 0 8.5 8.5"><rect x="0.5" y="0.5" width="7.5" height="7.5" fill="#fdfdfd" stroke="#b5b5b5" stroke-width="1"/><path d="M2 4.3 L3.6 6 L6.6 2.3" fill="none" stroke="#4b5d8c" stroke-width="1.1"/></svg>
<svg style="left:760px;top:248.9px" width="8.5" height="8.5" viewBox="0 0 8.5 8.5"><rect x="0.5" y="0.5" width="7.5" height="7.5" fill="#fdfdfd" stroke="#b5b5b5" stroke-width="1"/><path d="M2 4.3 L3.6 6 L6.6 2.3" fill="none" stroke="#4b5d8c" stroke-width="1.1"/></svg>
<svg style="left:760px;top:268.5px" width="8.5" height="8.5" viewBox="0 0 8.5 8.5"><rect x="0.5" y="0.5" width="7.5" height="7.5" fill="#fdfdfd" stroke="#b5b5b5" stroke-width="1"/><path d="M2 4.3 L3.6 6 L6.6 2.3" fill="none" stroke="#4b5d8c" stroke-width="1.1"/></svg>
<svg style="left:760px;top:288.2px" width="8.5" height="8.5" viewBox="0 0 8.5 8.5"><rect x="0.5" y="0.5" width="7.5" height="7.5" fill="#fdfdfd" stroke="#b5b5b5" stroke-width="1"/><path d="M2 4.3 L3.6 6 L6.6 2.3" fill="none" stroke="#4b5d8c" stroke-width="1.1"/></svg>
<svg style="left:760px;top:307.8px" width="8.5" height="8.5" viewBox="0 0 8.5 8.5"><rect x="0.5" y="0.5" width="7.5" height="7.5" fill="#fdfdfd" stroke="#b5b5b5" stroke-width="1"/><path d="M2 4.3 L3.6 6 L6.6 2.3" fill="none" stroke="#4b5d8c" stroke-width="1.1"/></svg>
<svg style="left:760px;top:327.5px" width="8.5" height="8.5" viewBox="0 0 8.5 8.5"><rect x="0.5" y="0.5" width="7.5" height="7.5" fill="#fdfdfd" stroke="#b5b5b5" stroke-width="1"/><path d="M2 4.3 L3.6 6 L6.6 2.3" fill="none" stroke="#4b5d8c" stroke-width="1.1"/></svg>
<svg style="left:760px;top:347.1px" width="8.5" height="8.5" viewBox="0 0 8.5 8.5"><rect x="0.5" y="0.5" width="7.5" height="7.5" fill="#fdfdfd" stroke="#b5b5b5" stroke-width="1"/><path d="M2 4.3 L3.6 6 L6.6 2.3" fill="none" stroke="#4b5d8c" stroke-width="1.1"/></svg>
<svg style="left:760px;top:366.8px" width="8.5" height="8.5" viewBox="0 0 8.5 8.5"><rect x="0.5" y="0.5" width="7.5" height="7.5" fill="#fdfdfd" stroke="#b5b5b5" stroke-width="1"/><path d="M2 4.3 L3.6 6 L6.6 2.3" fill="none" stroke="#4b5d8c" stroke-width="1.1"/></svg>
<svg style="left:760px;top:367.3px" width="8.5" height="8.5" viewBox="0 0 8.5 8.5"><rect x="0.5" y="0.5" width="7.5" height="7.5" fill="#fdfdfd" stroke="#b5b5b5" stroke-width="1"/><path d="M2 4.3 L3.6 6 L6.6 2.3" fill="none" stroke="#4b5d8c" stroke-width="1.1"/></svg>
<svg style="left:774.4px;top:133.0px" width="6" height="6" viewBox="0 0 6 6"><rect x="0.5" y="0.5" width="5" height="5" fill="#fff" stroke="#c8c8c8" stroke-width="1"/><path d="M1.5 3 H4.5" stroke="#999" stroke-width="0.9"/></svg>
<div class="t" style="left:783.60px;top:132.43px;font-size:8.5px;color:#333;transform:scaleX(0.809);">Project</div>
<div class="t" style="left:852.40px;top:132.43px;font-size:8.5px;color:#333;transform:scaleX(0.741);">Geotek LLC</div>
<svg style="left:780.8px;top:144.6px" width="6" height="6" viewBox="0 0 6 6"><rect x="0.5" y="0.5" width="5" height="5" fill="#fff" stroke="#c8c8c8" stroke-width="1"/><path d="M1.5 3 H4.5" stroke="#999" stroke-width="0.9"/></svg>
<div class="t" style="left:789.00px;top:144.03px;font-size:8.5px;color:#333;transform:scaleX(0.819);">Site</div>
<div class="t" style="left:795.70px;top:155.33px;font-size:8.5px;color:#333;transform:scaleX(0.764);">Subsoil</div>
<svg style="left:0;top:0" width="974" height="523"><g stroke="#dedede" stroke-width="1" fill="none"><path d="M777.5 139 V380"/><path d="M783.5 150.5 V380"/><path d="M790 173 V380"/><path d="M784 159.5 H795"/><path d="M790.5 189.4 H801"/><path d="M790.5 209.1 H801"/><path d="M790.5 228.7 H801"/><path d="M790.5 248.4 H801"/><path d="M790.5 268.0 H801"/><path d="M790.5 287.7 H801"/><path d="M790.5 307.3 H801"/><path d="M790.5 327.0 H801"/><path d="M790.5 346.6 H801"/><path d="M790.5 366.3 H801"/><path d="M790.5 366.8 H801"/></g></svg>
<div class="r" style="left:772.5px;top:164.9px;width:77.79999999999995px;height:18.69999999999999px;background:#a8c1e6;"></div>
<svg style="left:787.2px;top:167.3px" width="6" height="6" viewBox="0 0 6 6"><rect x="0.5" y="0.5" width="5" height="5" fill="#fff" stroke="#c8c8c8" stroke-width="1"/><path d="M1.5 3 H4.5" stroke="#999" stroke-width="0.9"/></svg>
<div class="t" style="left:796.00px;top:167.03px;font-size:8.5px;color:#222;transform:scaleX(0.768);">Building Element</div>
<div class="t" style="left:796.00px;top:175.03px;font-size:8.5px;color:#222;transform:scaleX(0.776);">Proxies</div>
<div class="t" style="left:802.60px;top:186.93px;font-size:8.5px;color:#333;transform:scaleX(0.754);">Building</div>
<div class="t" style="left:802.60px;top:195.03px;font-size:8.5px;color:#333;transform:scaleX(0.789);">Element Proxy</div>
<div class="t" style="left:852.40px;top:186.93px;font-size:8.5px;color:#333;transform:scaleX(0.800);">Sand</div>
<div class="t" style="left:802.60px;top:206.58px;font-size:8.5px;color:#333;transform:scaleX(0.754);">Building</div>
<div class="t" style="left:802.60px;top:214.68px;font-size:8.5px;color:#333;transform:scaleX(0.789);">Element Proxy</div>
<div class="t" style="left:852.40px;top:206.58px;font-size:8.5px;color:#333;transform:scaleX(0.800);">Clay</div>
<div class="t" style="left:802.60px;top:226.23px;font-size:8.5px;color:#333;transform:scaleX(0.754);">Building</div>
<div class="t" style="left:802.60px;top:234.33px;font-size:8.5px;color:#333;transform:scaleX(0.789);">Element Proxy</div>
<div class="t" style="left:852.40px;top:226.23px;font-size:8.5px;color:#333;transform:scaleX(0.800);">Silt mixture</div>
<div class="t" style="left:802.60px;top:245.88px;font-size:8.5px;color:#333;transform:scaleX(0.754);">Building</div>
<div class="t" style="left:802.60px;top:253.98px;font-size:8.5px;color:#333;transform:scaleX(0.789);">Element Proxy</div>
<div class="t" style="left:852.40px;top:245.88px;font-size:8.5px;color:#333;transform:scaleX(0.800);">Clay</div>
<div class="t" style="left:802.60px;top:265.53px;font-size:8.5px;color:#333;transform:scaleX(0.754);">Building</div>
<div class="t" style="left:802.60px;top:273.63px;font-size:8.5px;color:#333;transform:scaleX(0.789);">Element Proxy</div>
<div class="t" style="left:852.40px;top:265.53px;font-size:8.5px;color:#333;transform:scaleX(0.800);">Sand</div>
<div class="t" style="left:802.60px;top:285.18px;font-size:8.5px;color:#333;transform:scaleX(0.754);">Building</div>
<div class="t" style="left:802.60px;top:293.28px;font-size:8.5px;color:#333;transform:scaleX(0.789);">Element Proxy</div>
<div class="t" style="left:852.40px;top:285.18px;font-size:8.5px;color:#333;transform:scaleX(0.800);">Sand mixture</div>
<div class="t" style="left:802.60px;top:304.83px;font-size:8.5px;color:#333;transform:scaleX(0.754);">Building</div>
<div class="t" style="left:802.60px;top:312.93px;font-size:8.5px;color:#333;transform:scaleX(0.789);">Element Proxy</div>
<div class="t" style="left:852.40px;top:304.83px;font-size:8.5px;color:#333;transform:scaleX(0.800);">Clay</div>
<div class="t" style="left:802.60px;top:324.48px;font-size:8.5px;color:#333;transform:scaleX(0.754);">Building</div>
<div class="t" style="left:802.60px;top:332.58px;font-size:8.5px;color:#333;transform:scaleX(0.789);">Element Proxy</div>
<div class="t" style="left:852.40px;top:324.48px;font-size:8.5px;color:#333;transform:scaleX(0.800);">Sand</div>
<div class="t" style="left:802.60px;top:344.13px;font-size:8.5px;color:#333;transform:scaleX(0.754);">Building</div>
<div class="t" style="left:802.60px;top:352.23px;font-size:8.5px;color:#333;transform:scaleX(0.789);">Element Proxy</div>
<div class="t" style="left:852.40px;top:344.13px;font-size:8.5px;color:#333;transform:scaleX(0.800);">Sand mixture</div>
<div class="t" style="left:802.60px;top:363.78px;font-size:8.5px;color:#333;transform:scaleX(0.754);">Building</div>
<div class="t" style="left:802.60px;top:371.88px;font-size:8.5px;color:#333;transform:scaleX(0.789);">Element Proxy</div>
<div class="t" style="left:852.40px;top:363.78px;font-size:8.5px;color:#333;transform:scaleX(0.800);">Clay</div>
<div class="r" style="left:745px;top:380px;width:229px;height:11px;background:#f0f0f0;"></div>
<div class="r" style="left:745px;top:380px;width:229px;height:1px;background:#e8e8e8;"></div>
<div class="r" style="left:756px;top:381px;width:11px;height:9px;background:#cdcdcd;"></div>
<svg style="left:748px;top:382px" width="6" height="7" viewBox="0 0 6 7"><path d="M4.5 1 L1.8 3.5 L4.5 6" fill="none" stroke="#555" stroke-width="1.2"/></svg>
<svg style="left:964px;top:382px" width="6" height="7" viewBox="0 0 6 7"><path d="M1.5 1 L4.2 3.5 L1.5 6" fill="none" stroke="#555" stroke-width="1.2"/></svg>
<div class="r" style="left:745px;top:391px;width:229px;height:3px;background:#ffffff;"></div>
<svg style="left:852px;top:391.5px" width="12" height="2"><g fill="#b0b0b0"><rect x="0" y="0" width="1" height="1"/><rect x="2.5" y="0" width="1" height="1"/><rect x="5" y="0" width="1" height="1"/><rect x="7.5" y="0" width="1" height="1"/><rect x="10" y="0" width="1" height="1"/></g></svg>
<div class="r" style="left:745px;top:394.4px;width:229px;height:10.900000000000034px;background:#f5f5f5;"></div>
<div class="r" style="left:745px;top:405px;width:229px;height:1px;background:#d9d9d9;"></div>
<div class="r" style="left:745px;top:394px;width:229px;height:1px;background:#e3e3e3;"></div>
<div class="r" style="left:755.3px;top:394.4px;width:1.0px;height:10.900000000000034px;background:#d9d9d9;"></div>
<div class="r" style="left:848.6px;top:394.4px;width:1.0px;height:10.900000000000034px;background:#d9d9d9;"></div>
<div class="r" style="left:947.5px;top:394.4px;width:1.0px;height:10.900000000000034px;background:#d9d9d9;"></div>
<svg style="left:747px;top:397.5px" width="7" height="6" viewBox="0 0 7 6"><rect x="0.45" y="0.45" width="5.6" height="4.6" fill="#fff" stroke="#2a2a2a" stroke-width="0.9"/><rect x="0.45" y="0.45" width="5.6" height="1.3" fill="#2a2a2a"/><path d="M2.3 1.7 V5" stroke="#555" stroke-width="0.6"/><path d="M3.6 3.4 L6.8 3.4 L5.2 5.8Z" fill="#111"/></svg>
<div class="t" style="left:793.00px;top:396.03px;font-size:8.5px;color:#444;transform:scaleX(0.750);">Name</div>
<div class="t" style="left:889.70px;top:396.03px;font-size:8.5px;color:#444;transform:scaleX(0.758);">Value</div>
<div class="t" style="left:954.00px;top:396.03px;font-size:8.5px;color:#444;transform:scaleX(0.820);">Unit</div>
<div class="t" style="left:838.40px;top:407.13px;font-size:8.5px;color:#333;transform:scaleX(0.825);font-style:italic;">No properties</div>
<div class="r" style="left:745px;top:416px;width:229px;height:1px;background:#e3e3e3;"></div>
<div class="r" style="left:972.5px;top:98px;width:1.5px;height:409px;background:#e0e0e0;"></div>
<div class="r" style="left:745px;top:110px;width:1.2000000000000455px;height:397px;background:#d8d8d8;"></div>
</body></html>
